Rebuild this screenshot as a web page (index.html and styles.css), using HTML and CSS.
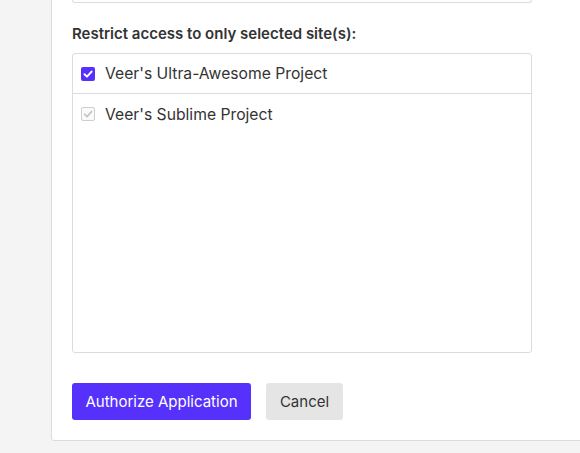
FILE: index.html
```html
<!DOCTYPE html>
<html>
<head>
<meta charset="utf-8">
<link rel="stylesheet" href="styles.css">
</head>
<body>
<div class="panel">
  <div class="input-box"></div>
  <div class="label">Restrict access to only selected site(s):</div>
  <div class="site-list">
    <label class="site-row">
      <span class="check checked"><svg viewBox="0 0 14 14" width="14" height="14"><path d="M3.5 7.2 L6 9.6 L10.6 4.6" fill="none" stroke="#fff" stroke-width="2" stroke-linecap="round" stroke-linejoin="round"/></svg></span>
      <span class="site-name">Veer's Ultra-Awesome Project</span>
    </label>
    <label class="site-row">
      <span class="check disabled"><svg viewBox="0 0 14 14" width="14" height="14"><path d="M3.5 7.2 L6 9.6 L10.6 4.6" fill="none" stroke="#c4c4c4" stroke-width="1.6" stroke-linecap="round" stroke-linejoin="round"/></svg></span>
      <span class="site-name">Veer's Sublime Project</span>
    </label>
  </div>
  <div class="actions">
    <button class="btn btn-primary">Authorize Application</button>
    <button class="btn btn-secondary">Cancel</button>
  </div>
</div>
</body>
</html>
```
FILE: styles.css
```css
html, body {
  margin: 0;
  padding: 0;
  background: #f4f4f4;
  font-family: Inter, "Liberation Sans", sans-serif;
  color: #333;
  overflow: hidden;
}
.panel {
  margin-top: -40px;
  margin-left: 51px;
  width: 560px;
  background: #fff;
  border: 1px solid #dcdcdc;
  border-radius: 3px;
  padding: 0 0 20px 20px;
  box-sizing: border-box;
}
.input-box {
  width: 460px;
  height: 42px;
  box-sizing: border-box;
  border: 1px solid #dcdcdc;
  border-top: none;
  border-radius: 0 0 3px 3px;
}
.label {
  margin-top: 22px;
  font-size: 15px;
  font-weight: 600;
  line-height: 18px;
  color: #333;
}
.site-list {
  margin-top: 10px;
  width: 460px;
  height: 300px;
  box-sizing: border-box;
  border: 1px solid #dcdcdc;
  border-radius: 3px;
}
.site-row {
  display: flex;
  align-items: center;
  height: 40px;
  box-sizing: border-box;
  padding-left: 8px;
  border-bottom: 1px solid #dcdcdc;
  font-size: 15.7px;
}
.site-row:last-child { border-bottom: none; }
.check {
  width: 14px;
  height: 14px;
  box-sizing: border-box;
  border-radius: 2px;
  margin-right: 10px;
  display: flex;
  flex: none;
}
.check svg { display: block; }
.check.checked { background: #5531fb; }
.check.disabled { border: 1px solid #cfcfcf; background: #fafafa; }
.check.disabled svg { margin: -1px; }
.site-name { color: #333; }
.actions {
  margin-top: 30px;
  display: flex;
  gap: 15px;
}
.btn {
  font-family: Inter, "Liberation Sans", sans-serif;
  font-size: 15px;
  height: 37px;
  border: none;
  border-radius: 3px;
  padding: 0;
  white-space: nowrap;
  cursor: pointer;
  box-sizing: border-box;
}
.btn-primary {
  background: #5531fb;
  color: #fff;
  width: 179px;
}
.btn-secondary {
  background: #e5e5e5;
  color: #333;
  width: 77px;
}
```
